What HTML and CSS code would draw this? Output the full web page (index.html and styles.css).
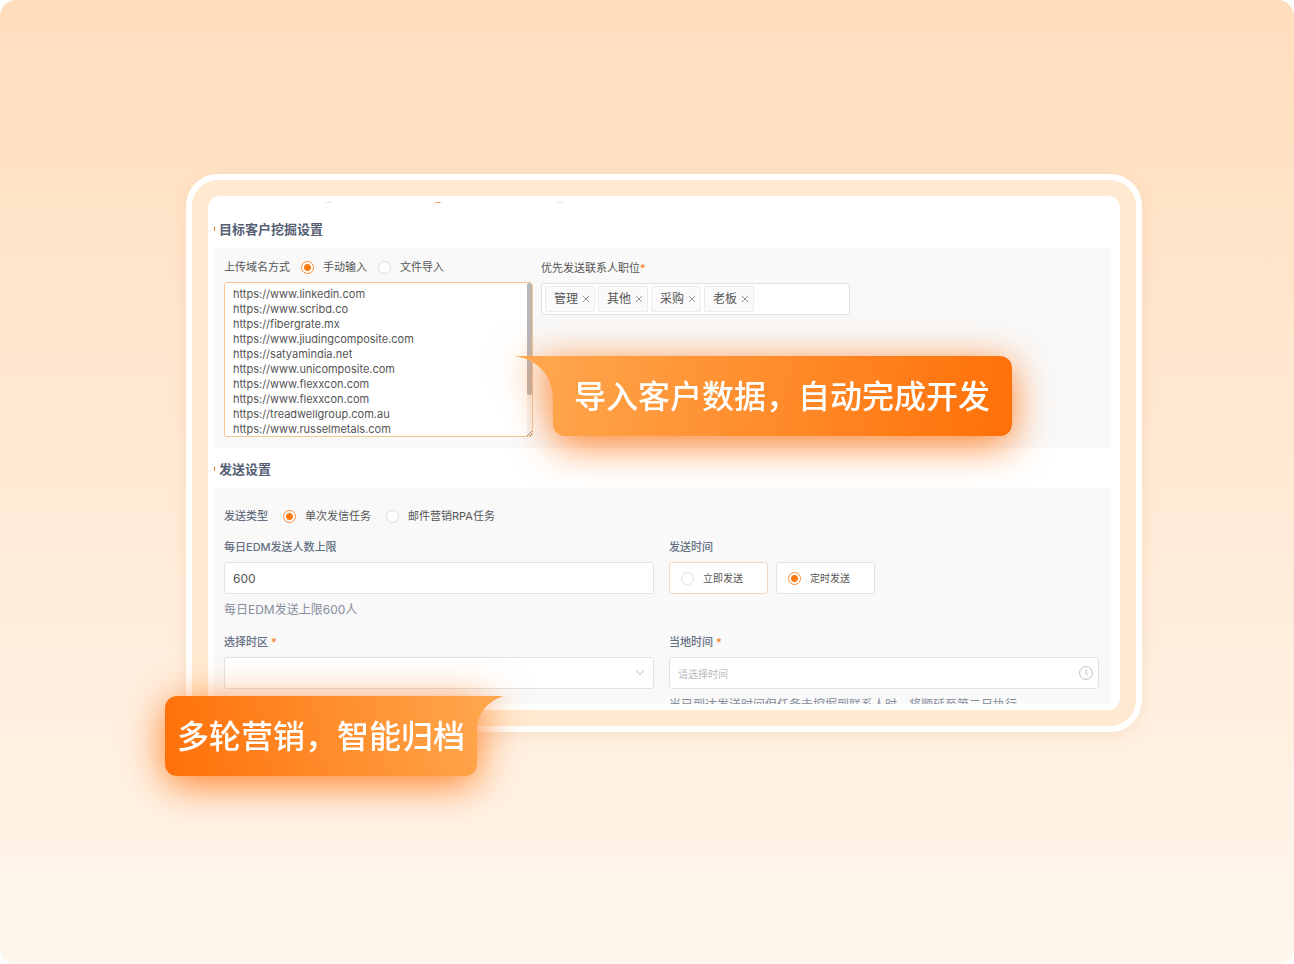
FILE: index.html
```html
<!DOCTYPE html>
<html lang="zh-CN">
<head>
    <meta charset="UTF-8">
    <meta name="viewport" content="width=device-width, initial-scale=1.0">
    <title>目标客户挖掘设置</title>
    <link rel="stylesheet" href="styles.css">
</head>
<body>
    <main class="stage">
        <div class="device">
            <form class="screen">
                <div class="content">
                    <!-- Step indicator, scrolled almost out of view -->
                    <div class="steps">
                        <span class="step"></span>
                        <span class="step active"></span>
                        <span class="step"></span>
                    </div>

                    <!-- Target customers -->
                    <h2>目标客户挖掘设置</h2>
                    <section class="panel target-panel">
                        <div class="field">
                            <div class="radio-row">
                                <span class="row-label">上传域名方式</span>
                                <label class="radio"><input type="radio" name="upload" checked>手动输入</label>
                                <label class="radio"><input type="radio" name="upload">文件导入</label>
                            </div>
                            <div class="domains-box">
                                <textarea class="domains" aria-label="域名列表">https://www.linkedin.com
https://www.scribd.co
https://fibergrate.mx
https://www.jiudingcomposite.com
https://satyamindia.net
https://www.unicomposite.com
https://www.flexxcon.com
https://www.flexxcon.com
https://treadwellgroup.com.au
https://www.russelmetals.com</textarea>
                                <span class="scrollbar"></span>
                                <svg class="grip" viewBox="0 0 5 5"><path d="M0 5L5 0M3 5L5 3"/></svg>
                            </div>
                        </div>
                        <div class="field">
                            <label class="plain-label" for="position">优先发送联系人职位<span class="required">*</span></label>
                            <div class="control tag-box">
                                <span class="tag">管理<button type="button" aria-label="移除管理"><svg viewBox="0 0 8 8"><path d="M1 1l6 6M7 1L1 7"/></svg></button></span>
                                <span class="tag">其他<button type="button" aria-label="移除其他"><svg viewBox="0 0 8 8"><path d="M1 1l6 6M7 1L1 7"/></svg></button></span>
                                <span class="tag">采购<button type="button" aria-label="移除采购"><svg viewBox="0 0 8 8"><path d="M1 1l6 6M7 1L1 7"/></svg></button></span>
                                <span class="tag">老板<button type="button" aria-label="移除老板"><svg viewBox="0 0 8 8"><path d="M1 1l6 6M7 1L1 7"/></svg></button></span>
                                <input type="text" id="position">
                            </div>
                        </div>
                    </section>

                    <!-- Send settings -->
                    <h2>发送设置</h2>
                    <section class="panel send-panel">
                        <div class="radio-row type-row">
                            <span class="field-label">发送类型</span>
                            <label class="radio"><input type="radio" name="type" checked>单次发信任务</label>
                            <label class="radio"><input type="radio" name="type">邮件营销RPA任务</label>
                        </div>
                        <div class="form-grid">
                            <div class="field">
                                <label class="field-label" for="limit">每日EDM发送人数上限</label>
                                <input class="control" type="text" id="limit" value="600">
                                <p class="hint">每日EDM发送上限600人</p>
                            </div>
                            <div class="field">
                                <span class="field-label">发送时间</span>
                                <div class="card-row">
                                    <label class="control radio card warm"><input type="radio" name="when">立即发送</label>
                                    <label class="control radio card"><input type="radio" name="when" checked>定时发送</label>
                                </div>
                            </div>
                            <div class="field">
                                <label class="field-label" for="zone">选择时区 <span class="required">*</span></label>
                                <div class="icon-control">
                                    <select class="control" id="zone"><option></option></select>
                                    <svg class="arrow" viewBox="0 0 10 10"><path d="M1 2l4 5 4-5"/></svg>
                                </div>
                            </div>
                            <div class="field">
                                <label class="field-label" for="time">当地时间 <span class="required">*</span></label>
                                <div class="icon-control">
                                    <input class="control" type="text" id="time" placeholder="请选择时间">
                                    <svg class="clock" viewBox="0 0 14 14"><circle cx="7" cy="7" r="6.4"/><path d="M7 3.4V7.6L9 9.4"/></svg>
                                </div>
                                <p class="hint">当已到达发送时间但任务未挖掘到联系人时，将顺延至第二日执行</p>
                            </div>
                        </div>
                    </section>
                </div>
            </form>

            <p class="callout callout-import">导入客户数据，自动完成开发</p>
            <p class="callout callout-archive">多轮营销，智能归档</p>
        </div>
    </main>
</body>
</html>
```
FILE: styles.css
```css
* {
    box-sizing: border-box;
}
body {
    margin: 0;
    background-color: #fff;
    font-family: Inter, "Noto Sans CJK SC", sans-serif;
    font-size: 11px;
    line-height: 16px;
    color: #555;
}
h2, p {
    margin: 0;
}
input, textarea, select, button {
    font: inherit;
    color: inherit;
}
.stage {
    display: flex;
    height: 100vh;
    padding: 174px 152px 232px 186px;
    border-radius: 16px;
    background: linear-gradient(#ffdebd, #ffead5 50%, #fff6ec);
    overflow: hidden;
}

/* Device frame */
.device {
    position: relative;
    display: flex;
    flex: 1;
    min-width: 0;
    padding: 16px;
    border: 6px solid #fff;
    border-radius: 32px;
    background-color: #ffead1;
    box-shadow: 0 4px 16px rgba(200, 120, 60, 0.12);
}
.screen {
    flex: 1;
    min-width: 0;
    padding: 6px;
    border-radius: 12px;
    background-color: #fff;
}
.content {
    height: 100%;
    padding-right: 3px;
    overflow: hidden;
}
.steps {
    display: grid;
    grid-template-columns: 109px 122px auto;
    align-items: end;
    height: 1px;
    margin-bottom: 5px;
    padding-left: 108px;
    overflow: hidden;
}
.step {
    width: 14px;
    height: 14px;
    border-radius: 50%;
    background-color: #ddd;
}
.step.active {
    background-color: #ff8a3c;
}
h2 {
    display: flex;
    align-items: center;
    gap: 4px;
    padding: 12px 0 10px;
    font-size: 13px;
    font-weight: 700;
    line-height: 18px;
    color: #556074;
}
h2::before {
    content: "";
    width: 1px;
    height: 4px;
    background-color: #ff7a0e;
}

/* Panels */
.panel {
    border-radius: 4px;
    background-color: #f9f9f9;
}
.target-panel {
    display: grid;
    grid-template-columns: minmax(0, 309px) minmax(0, 309px);
    gap: 8px;
    padding: 11px 12px 11px 10px;
}
.send-panel {
    padding: 20px 12px 12px 10px;
}
.form-grid {
    display: grid;
    grid-template-columns: 1fr 1fr;
    gap: 16px 15px;
}
.field {
    display: flex;
    flex-direction: column;
    gap: 7px;
    min-width: 0;
}
.field-label {
    font-weight: 500;
    color: #657083;
}
.plain-label {
    padding-top: 1px;
}
.required {
    color: #ff7a0e;
}
.hint {
    font-size: 12px;
    line-height: 17px;
    color: #858d9b;
    white-space: nowrap;
}

/* Radios */
.radio-row {
    display: flex;
    align-items: center;
    gap: 11px;
}
.type-row {
    gap: 15px;
    margin-bottom: 15px;
}
.radio {
    display: flex;
    align-items: center;
    gap: 9px;
}
.radio input {
    appearance: none;
    width: 13px;
    height: 13px;
    margin: 0;
    border: 1px solid #ddd;
    border-radius: 50%;
    background-color: #fff;
}
.radio input:checked {
    border-color: #ff8a33;
    background: radial-gradient(circle, #ff7a0e 3px, #fff 4px);
}

/* Controls */
.control {
    width: 100%;
    height: 32px;
    padding: 0 8px;
    border: 1px solid #e2e2e2;
    border-radius: 3px;
    background-color: #fff;
    font-size: 12px;
    outline: none;
}
.control::placeholder {
    font-size: 10px;
    color: #bbb;
}
.domains-box {
    position: relative;
}
.domains {
    display: block;
    width: 100%;
    height: 155px;
    padding: 4px 8px;
    border: 1px solid #f8c48f;
    border-radius: 3px;
    background-color: #fff;
    line-height: 15px;
    outline: none;
    resize: none;
    scrollbar-width: none;
}
.scrollbar {
    position: absolute;
    top: 1px;
    right: 1px;
    bottom: 1px;
    width: 5px;
    background-color: #f3f3f3;
    pointer-events: none;
}
.scrollbar::before {
    content: "";
    display: block;
    height: 73%;
    border-radius: 3px;
    background-color: #b8b8b8;
}
.grip {
    position: absolute;
    right: 1px;
    bottom: 1px;
    width: 5px;
    height: 5px;
    stroke: #888;
}
.tag-box {
    display: flex;
    align-items: center;
    gap: 3px;
    padding: 0 3px;
}
.tag-box input {
    flex: 1;
    min-width: 0;
    border: 0;
    outline: none;
    background: none;
}
.tag {
    display: flex;
    align-items: center;
    gap: 4px;
    height: 26px;
    padding: 0 4px 0 8px;
    border: 1px solid #ececec;
    border-radius: 2px;
    background-color: #fafafa;
}
.tag button {
    display: flex;
    width: 8px;
    padding: 0;
    border: 0;
    background: none;
}
.tag svg {
    width: 8px;
    height: 8px;
    stroke: #999;
}
.card-row {
    display: flex;
    gap: 8px;
}
.card {
    width: 99px;
    padding: 0 11px;
    font-size: 10px;
}
.card.warm {
    border-color: #f3d9c4;
}
.icon-control {
    position: relative;
}
.icon-control select {
    display: block;
    appearance: none;
}
.icon-control input {
    display: block;
}
.icon-control svg {
    position: absolute;
    top: 0;
    bottom: 0;
    margin: auto 0;
    fill: none;
    stroke: #bfbfbf;
    pointer-events: none;
}
.arrow {
    right: 9px;
    width: 10px;
    height: 10px;
}
.clock {
    right: 6px;
    width: 14px;
    height: 14px;
}

/* Callouts over the frame */
.callout {
    position: absolute;
    height: 80px;
    font-size: 32px;
    font-weight: 500;
    line-height: 82px;
    color: #fff;
    white-space: nowrap;
    filter: drop-shadow(0 8px 20px rgba(255, 106, 0, 0.85));
}
.callout::before {
    content: "";
    position: absolute;
    top: 0;
    background-color: #ffa54b;
}
.callout-import {
    top: 176px;
    right: 124px;
    padding: 0 22px 0 21px;
    border-radius: 0 12px 12px 12px;
    background: linear-gradient(100deg, #ffa54b, #ff7008);
}
.callout-import::before {
    right: 100%;
    width: 39px;
    height: 44px;
    clip-path: path("M0 0H39V44C39 20 24 3 0 0Z");
}
.callout-archive {
    bottom: -50px;
    left: -27px;
    padding: 0 12px;
    border-radius: 12px 0 12px 12px;
    background: linear-gradient(80deg, #ff7008, #ffa54b);
}
.callout-archive::before {
    left: 100%;
    width: 27px;
    height: 34px;
    clip-path: path("M27 0H0V34C0 18 10 5 27 0Z");
}
```
